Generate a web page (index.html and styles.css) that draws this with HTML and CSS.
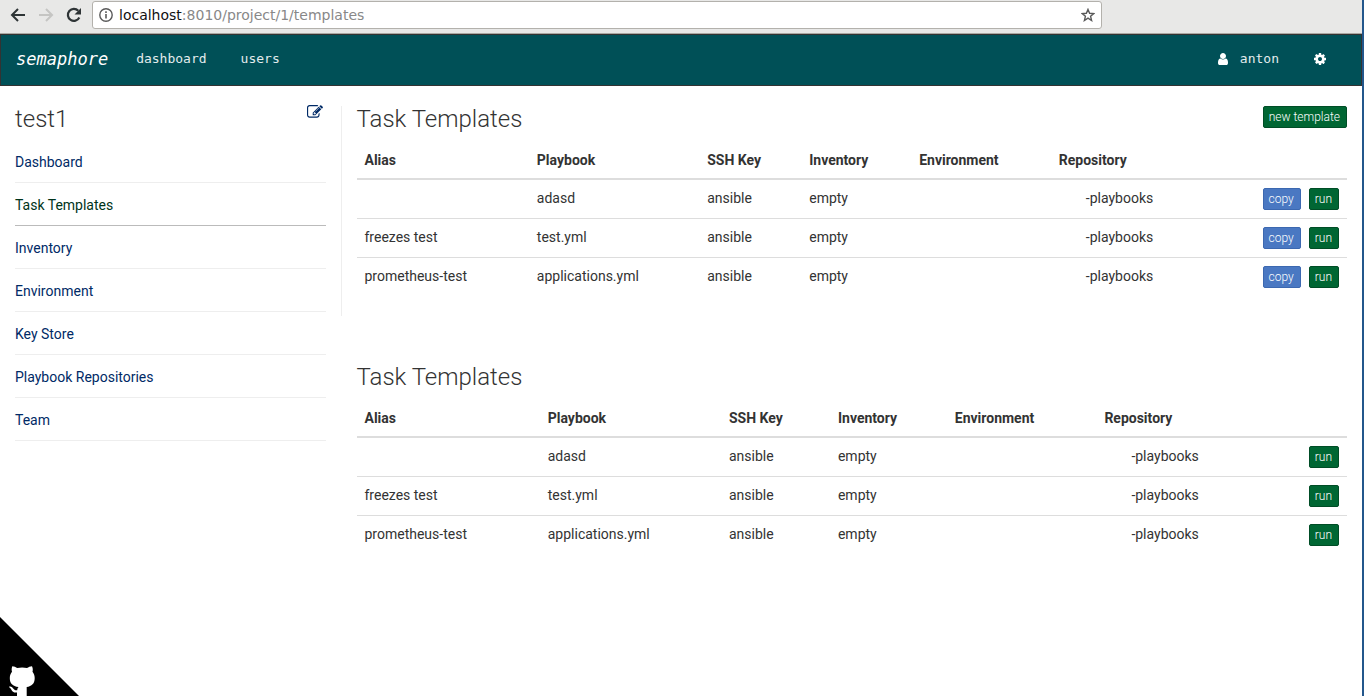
FILE: index.html
```html
<!DOCTYPE html>
<html lang="en">
<head>
<meta charset="utf-8">
<title>Task Templates</title>
<link rel="stylesheet" href="styles.css">
</head>
<body>
<div class="toolbar">
  <button class="tool" aria-label="Back"><svg viewBox="0 0 16 16"><path d="M15 8H2.500M8 2L2 8l6 6" fill="none" stroke="#2e3436" stroke-width="2"/></svg></button>
  <button class="tool" aria-label="Forward" disabled><svg viewBox="0 0 16 16"><path d="M1 8h12.500M8 2l6 6-6 6" fill="none" stroke="#c5c5c3" stroke-width="2"/></svg></button>
  <button class="tool" aria-label="Reload"><svg viewBox="0 0 16 16"><path d="M13.300 10.500A6 6 0 1 1 12.300 3.800" fill="none" stroke="#2e3436" stroke-width="2.200"/><path d="M15 1v6.500H8.500z" fill="#2e3436"/></svg></button>
  <div class="address">
    <svg class="info" viewBox="0 0 14 14"><circle cx="7" cy="7" r="6.200" fill="none" stroke="#5a5a5a" stroke-width="1.400"/><path d="M6.200 6h1.600v4.500H6.200zM6.200 3.300h1.600v1.600H6.200z" fill="#5a5a5a"/></svg>
    <span class="url"><span class="host">localhost</span>:8010/project/1/templates</span>
    <button class="star" aria-label="Bookmark"><svg viewBox="0 0 14 14"><path d="M7 1.400l1.600 3.900 4.200.3-3.200 2.700 1 4.200L7 10.200l-3.600 2.300 1-4.200L1.200 5.600l4.200-.3z" fill="none" stroke="#5a5a5a" stroke-width="1.400"/></svg></button>
  </div>
</div>
<nav class="navbar">
  <a class="brand" href="#">semaphore</a>
  <a class="nav-link" href="#">dashboard</a>
  <a class="nav-link" href="#">users</a>
  <a class="nav-link user" href="#"><svg class="fa" viewBox="0 0 1792 1792"><path d="M1536 1399q0 109-62.500 187t-150.500 78h-854q-88 0-150.500-78t-62.500-187q0-85 8.500-160.500t31.500-152 58.500-131 94-89 134.500-34.500q131 128 313 128t313-128q76 0 134.500 34.500t94 89 58.500 131 31.500 152 8.500 160.500zm-256-887q0 159-112.500 271.500t-271.500 112.500-271.500-112.500-112.500-271.500 112.500-271.500 271.500-112.500 271.500 112.500 112.500 271.500z"/></svg>anton</a>
  <a class="nav-link" href="#" aria-label="Settings"><svg class="fa" viewBox="0 0 1792 1792"><path d="M1152 896q0-106-75-181t-181-75-181 75-75 181 75 181 181 75 181-75 75-181zm512-109v222q0 12-8 23t-20 13l-185 28q-19 54-39 91 35 50 107 138 10 12 10 25t-9 23q-27 37-99 108t-94 71q-12 0-26-9l-138-108q-44 23-91 38-16 136-29 186-7 28-36 28h-222q-14 0-24.500-8.500t-11.500-21.500l-28-184q-49-16-90-37l-141 107q-10 9-25 9-14 0-25-11-126-114-165-168-7-10-7-23 0-12 8-23 15-21 51-66.500t54-70.500q-27-50-41-99l-183-27q-13-2-21-12.500t-8-23.500v-222q0-12 8-23t19-13l186-28q14-46 39-92-40-57-107-138-10-12-10-24 0-10 9-23 26-36 98.500-107.500t94.500-71.500q13 0 26 10l138 107q44-23 91-38 16-136 29-186 7-28 36-28h222q14 0 24.500 8.500t11.500 21.500l28 184q49 16 90 37l142-107q9-9 24-9 13 0 25 10 129 119 165 170 7 8 7 22 0 12-8 23-15 21-51 66.500t-54 70.500q26 50 41 98l183 28q13 2 21 12.500t8 23.500z"/></svg></a>
</nav>
<div class="page">
  <aside class="sidebar">
    <div class="heading">
      <h3>test1</h3>
      <a class="edit" href="#" aria-label="Edit project"><svg viewBox="0 256 1792 1408"><path d="M888 1184l116-116-152-152-116 116v56h96v96h56zm440-720q-16-16-33 1l-350 350q-17 17-1 33t33-1l350-350q17-17 1-33zm80 594v190q0 119-84.500 203.500t-203.500 84.500h-832q-119 0-203.500-84.500t-84.500-203.500v-832q0-119 84.500-203.500t203.500-84.500h832q63 0 117 25 15 7 18 23 3 17-9 29l-49 49q-14 14-32 8-23-6-45-6h-832q-66 0-113 47t-47 113v832q0 66 47 113t113 47h832q66 0 113-47t47-113v-126q0-13 9-22l64-64q15-15 35-7t20 29zm-96-738l288 288-672 672h-288v-288zm444 132l-92 92-288-288 92-92q28-28 68-28t68 28l152 152q28 28 28 68t-28 68z"/></svg></a>
    </div>
    <ul class="menu">
      <li><a href="#">Dashboard</a></li>
      <li class="active"><a href="#">Task Templates</a></li>
      <li><a href="#">Inventory</a></li>
      <li><a href="#">Environment</a></li>
      <li><a href="#">Key Store</a></li>
      <li><a href="#">Playbook Repositories</a></li>
      <li><a href="#">Team</a></li>
    </ul>
  </aside>
  <main class="content">
    <section class="panel ruled">
      <div class="heading"><h3>Task Templates</h3><button class="btn run">new template</button></div>
      <table class="with-copy">
        <thead><tr><th class="alias">Alias</th><th class="playbook">Playbook</th><th class="key">SSH Key</th><th class="inventory">Inventory</th><th class="environment">Environment</th><th class="repository">Repository</th><th></th></tr></thead>
        <tbody>
          <tr><td></td><td>adasd</td><td>ansible</td><td>empty</td><td></td><td class="repo">-playbooks</td><td><div class="actions"><button class="btn copy">copy</button><button class="btn run">run</button></div></td></tr>
          <tr><td>freezes test</td><td>test.yml</td><td>ansible</td><td>empty</td><td></td><td class="repo">-playbooks</td><td><div class="actions"><button class="btn copy">copy</button><button class="btn run">run</button></div></td></tr>
          <tr><td>prometheus-test</td><td>applications.yml</td><td>ansible</td><td>empty</td><td></td><td class="repo">-playbooks</td><td><div class="actions"><button class="btn copy">copy</button><button class="btn run">run</button></div></td></tr>
        </tbody>
      </table>
    </section>
    <section class="panel">
      <div class="heading"><h3>Task Templates</h3></div>
      <table class="run-only">
        <thead><tr><th class="alias">Alias</th><th class="playbook">Playbook</th><th class="key">SSH Key</th><th class="inventory">Inventory</th><th class="environment">Environment</th><th class="repository">Repository</th><th></th></tr></thead>
        <tbody>
          <tr><td></td><td>adasd</td><td>ansible</td><td>empty</td><td></td><td class="repo">-playbooks</td><td><div class="actions"><button class="btn run">run</button></div></td></tr>
          <tr><td>freezes test</td><td>test.yml</td><td>ansible</td><td>empty</td><td></td><td class="repo">-playbooks</td><td><div class="actions"><button class="btn run">run</button></div></td></tr>
          <tr><td>prometheus-test</td><td>applications.yml</td><td>ansible</td><td>empty</td><td></td><td class="repo">-playbooks</td><td><div class="actions"><button class="btn run">run</button></div></td></tr>
        </tbody>
      </table>
    </section>
  </main>
</div>
<a class="github" href="#" aria-label="GitHub"><svg viewBox="0 0 80 80"><path d="M0 1v79h79z"/><path fill="#fff" d="M12.300 50.200c1.800 0 3.500.9 5 1.800 3-.7 6.700-.7 9.700 0 1.500-.9 3.200-1.800 5-1.800.9 1.900 1 3.800.5 5.500 1.500 1.900 2.200 3.800 2.200 6.300 0 5.700-3 8.300-8 9v9H17v-3.500c-5 .8-5-2.500-6.700-4.200-.5-.6-1.200-.8-1.300-1.500 1.800-1 3.700.8 4.700 2.200 1 1.300 2 1.600 3.500 1.200.2-1.400.5-2.400 1.300-3.200-5.700-.7-8.700-3.300-8.700-9 0-2.500.7-4.400 2.200-6.300-.5-1.700-.5-3.600.3-5.500z"/></svg></a>
</body>
</html>
```

FILE: styles.css
```css
* { box-sizing: border-box; }

body {
  margin: 0;
  min-height: 100vh;
  border-right: 2px solid #23578c;
  background: #fff;
  color: #333;
  font: 14px/20px Roboto, sans-serif;
}

a { text-decoration: none; }
button { font-family: inherit; cursor: pointer; }
svg { display: block; }

.toolbar {
  display: flex;
  align-items: center;
  gap: 12px;
  height: 34px;
  padding: 0 0 4px 10px;
  background: #e8e8e7;
  border-bottom: 1px solid #aaa9a3;
}
.tool, .star { padding: 0; border: 0; background: none; }
.tool svg { width: 16px; height: 16px; }
.address {
  display: flex;
  align-items: center;
  gap: 6px;
  width: 74.7%;
  height: 28px;
  margin-left: -2px;
  padding: 0 6px;
  border: 1px solid #b3b1ac;
  border-radius: 3px;
  background: #fff;
}
.info { width: 14px; height: 14px; }
.star { margin-left: auto; }
.star svg { width: 14px; height: 14px; }
.url { color: #888; font: 14px/20px "DejaVu Sans", sans-serif; }
.host { color: #111; }

.navbar {
  display: flex;
  align-items: center;
  height: 52px;
  padding: 0 17px 2px 0;
  border: 1px solid #333;
  background: #005057;
  font: 13px/20px "DejaVu Sans Mono", monospace;
}
.brand { padding: 0 11px 0 15px; color: #fff; font-size: 17px; font-style: italic; }
.nav-link { display: flex; align-items: center; gap: 10px; padding: 0 17px; color: #e3eced; }
.user { margin-left: auto; }
.fa { width: 14px; height: 14px; fill: #fff; }

.page { display: flex; padding-top: 20px; }
.sidebar { width: 25%; padding: 0 15px; }
.content { width: 75%; }
.heading { display: flex; justify-content: space-between; align-items: flex-start; height: 28px; }
h3 { margin: 0; font-size: 24px; line-height: 26px; font-weight: 300; }
.edit { padding-right: 3px; }
.edit svg { width: 16px; height: 13px; overflow: visible; fill: #002a66; }

.menu { margin: 6px 0 0; padding: 0; list-style: none; }
.menu li { padding: 12px 0 10px; border-bottom: 1px solid #eee; }
.menu a { color: #002a66; }
.menu .active { border-color: #bbb; }
.menu .active a { color: #00331a; }

.panel { padding: 0 15px 20px; border-left: 1px solid transparent; margin-bottom: 48px; }
.ruled { border-color: #eee; }

table { width: 100%; margin-top: 8px; border-collapse: collapse; table-layout: fixed; }
th, td { padding: 8px; text-align: left; vertical-align: top; white-space: nowrap; }
th { font-weight: 700; border-bottom: 2px solid #ddd; }
td { border-top: 1px solid #ddd; }
td.repo { padding-left: 35px; }

.with-copy .alias { width: 17.4%; }
.with-copy .playbook { width: 17.2%; }
.with-copy .key { width: 10.3%; }
.with-copy .inventory { width: 11.1%; }
.with-copy .environment { width: 14.1%; }
.with-copy .repository { width: 20%; }

.run-only .alias { width: 18.5%; }
.run-only .playbook { width: 18.3%; }
.run-only .key { width: 11%; }
.run-only .inventory { width: 11.8%; }
.run-only .environment { width: 15.1%; }
.run-only .repository { width: 20%; }

.actions { display: flex; justify-content: flex-end; gap: 8px; }
.btn {
  padding: 1px 6px 1px 5px;
  border: 1px solid;
  border-radius: 2px;
  color: #fff;
  font-size: 12px;
  line-height: 18px;
  font-weight: 300;
}
.run { background: #006633; border-color: #004d26; }
.copy { background: #4a78c2; border-color: #3c68b0; }

.github { position: fixed; left: 0; bottom: 0; }
.github svg { width: 80px; height: 80px; }
```
